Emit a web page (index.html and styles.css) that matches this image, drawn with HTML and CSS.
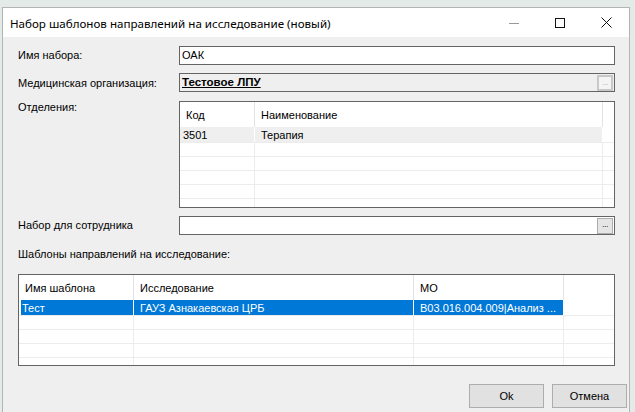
FILE: index.html
```html
<!DOCTYPE html>
<html lang="ru">
<head>
<meta charset="utf-8">
<title>Набор шаблонов</title>
<link rel="stylesheet" href="styles.css">
</head>
<body>
<div class="window">
  <div class="titlebar">
    <span class="title">Набор шаблонов направлений на исследование (новый)</span>
    <div class="caption">
      <span class="cbtn"><svg width="10" height="10" viewBox="0 0 10 10"><path d="M0 5.5h10" stroke="#999" stroke-width="1"/></svg></span>
      <span class="cbtn"><svg width="10" height="10" viewBox="0 0 10 10"><rect x="0.5" y="0.5" width="9" height="9" fill="none" stroke="#111" stroke-width="1"/></svg></span>
      <span class="cbtn"><svg width="11" height="11" viewBox="0 0 11 11"><path d="M0.5 0.5l10 10M10.5 0.5l-10 10" stroke="#111" stroke-width="1"/></svg></span>
    </div>
  </div>
  <div class="content">
    <div class="form">
      <div class="label lbl-mid">Имя набора:</div>
      <div class="field"><span class="val">ОАК</span></div>

      <div class="label lbl-mid">Медицинская организация:</div>
      <div class="field field-ro"><span class="val bold">Тестовое ЛПУ</span><span class="dots dots-dis">...</span></div>

      <div class="label lbl-top">Отделения:</div>
      <div class="grid grid1">
        <div class="gh"><div class="c c1">Код</div><div class="c c2">Наименование</div><div class="c cf"></div></div>
        <div class="gr first sel-grey"><div class="c c1 dt">3501</div><div class="c c2">Терапия</div><div class="c cf"></div></div>
        <div class="gr"><div class="c c1"></div><div class="c c2"></div><div class="c cf"></div></div>
        <div class="gr"><div class="c c1"></div><div class="c c2"></div><div class="c cf"></div></div>
        <div class="gr"><div class="c c1"></div><div class="c c2"></div><div class="c cf"></div></div>
        <div class="gr"><div class="c c1"></div><div class="c c2"></div><div class="c cf"></div></div>
        <div class="gr"><div class="c c1"></div><div class="c c2"></div><div class="c cf"></div></div>
      </div>

      <div class="label lbl-mid">Набор для сотрудника</div>
      <div class="field field-last"><span class="val"></span><span class="dots">...</span></div>
    </div>

    <div class="section-label">Шаблоны направлений на исследование:</div>

    <div class="grid grid2">
      <div class="gh"><div class="c d1">Имя шаблона</div><div class="c d2">Исследование</div><div class="c d3">МО</div><div class="c df"></div></div>
      <div class="gr first sel-blue"><div class="c d1 dt">Тест</div><div class="c d2">ГАУЗ Азнакаевская ЦРБ</div><div class="c d3">B03.016.004.009|Анализ ...</div><div class="c df"></div></div>
      <div class="gr"><div class="c d1"></div><div class="c d2"></div><div class="c d3"></div><div class="c df"></div></div>
      <div class="gr"><div class="c d1"></div><div class="c d2"></div><div class="c d3"></div><div class="c df"></div></div>
      <div class="gr"><div class="c d1"></div><div class="c d2"></div><div class="c d3"></div><div class="c df"></div></div>
      <div class="gr"><div class="c d1"></div><div class="c d2"></div><div class="c d3"></div><div class="c df"></div></div>
    </div>
  </div>
  <div class="footer">
    <button class="btn">Ok</button>
    <button class="btn">Отмена</button>
  </div>
</div>
</body>
</html>
```
FILE: styles.css
```css
html, body {
  margin: 0;
  padding: 0;
}
body {
  background: #e4eae8;
  width: 635px;
  height: 412px;
  overflow: hidden;
  font-family: "Liberation Sans", Arial, sans-serif;
  font-size: 11px;
  color: #000;
}
.window {
  margin: 7px 0 0 2px;
  width: 626px;
  height: 420px;
  background: #efefef;
  border: 1px solid #b4b4b4;
  border-bottom: none;
}
.titlebar {
  height: 29px;
  background: #fff;
  display: flex;
  align-items: center;
  justify-content: space-between;
  padding-left: 7px;
}
.title {
  font-family: "Noto Sans", "Open Sans", sans-serif;
  font-size: 11.6px;
  color: #000;
  padding-top: 1px;
}
.caption {
  display: flex;
  height: 29px;
}
.cbtn {
  width: 46px;
  height: 29px;
  display: flex;
  align-items: center;
  justify-content: center;
}
.content {
  padding: 9px 14px 0 15px;
}
.form {
  display: grid;
  grid-template-columns: 161px 436px;
  row-gap: 8px;
}
.label {
  line-height: 13px;
}
.lbl-mid {
  align-self: center;
}
.lbl-top {
  padding-top: 0;
}
.field {
  height: 17px;
  border: 1px solid #646464;
  background: #fff;
  display: flex;
  align-items: center;
  justify-content: space-between;
  padding: 0 1px 0 2px;
}
.field-ro {
  background: #efefef;
  margin-bottom: 1px;
}
.val {
  line-height: 13px;
}
.bold {
  font-weight: bold;
  text-decoration: underline;
  font-size: 11.5px;
}
.dots {
  width: 14px;
  height: 14px;
  border: 1px solid #adadad;
  background: #e5e5e5;
  font-size: 9px;
  line-height: 10px;
  text-align: center;
  color: #333;
  letter-spacing: -0.5px;
}
.dots-dis {
  width: 12px;
  height: 12px;
  border: 2px solid #c8c8c8;
  background: #f4f4f4;
  color: #bbb;
}
.grid {
  border: 1px solid #646464;
  background: #fff;
  overflow: hidden;
}
.grid1 {
  height: 105px;
}
.grid2 {
  height: 90px;
  width: 595px;
  margin-top: 13px;
}
.gh {
  display: flex;
  height: 25px;
}
.gh .c {
  display: flex;
  align-items: center;
  border-right: 1px solid #e3e3e3;
  padding-left: 6px;
}
.gh .cf, .gh .df {
  border-right: none;
}
.gr {
  display: flex;
  height: 13px;
  border-bottom: 1px solid #ececec;
}
.gr.first {
  height: 15px;
}
.gr .c {
  display: flex;
  align-items: center;
  border-right: 1px solid #ececec;
  padding-left: 6px;
  white-space: nowrap;
  overflow: hidden;
}
.gr .cf, .gr .df {
  border-right: none;
}
.gr .dt {
  padding-left: 3px;
}
.c { box-sizing: border-box; }
.c1 { width: 75px; }
.c2 { width: 348px; }
.cf { width: 11px; }
.d1 { width: 115px; }
.d2 { width: 280px; }
.d3 { width: 150px; }
.df { width: 50px; }
.sel-grey .c1, .sel-grey .c2 {
  background: #efefef;
  border-right-color: #fff;
}
.sel-blue .d1, .sel-blue .d2, .sel-blue .d3 {
  background: #0078d7;
  color: #fff;
  border-right-color: #fff;
}
.sel-blue .d1 {
  background: linear-gradient(to right, #fff 2px, #0078d7 2px);
}
.gh .d1 { padding-left: 6px; }
.sel-blue .d1.dt { padding-left: 3px; }
.section-label {
  line-height: 13px;
  margin-top: 13px;
}
.footer {
  display: flex;
  justify-content: flex-end;
  gap: 8px;
  padding-right: 2px;
  margin-top: 18px;
}
.btn {
  width: 75px;
  height: 24px;
  border: 1px solid #adadad;
  background: #e1e1e1;
  font-family: "Liberation Sans", Arial, sans-serif;
  font-size: 11px;
  color: #000;
  padding: 0;
}
```
